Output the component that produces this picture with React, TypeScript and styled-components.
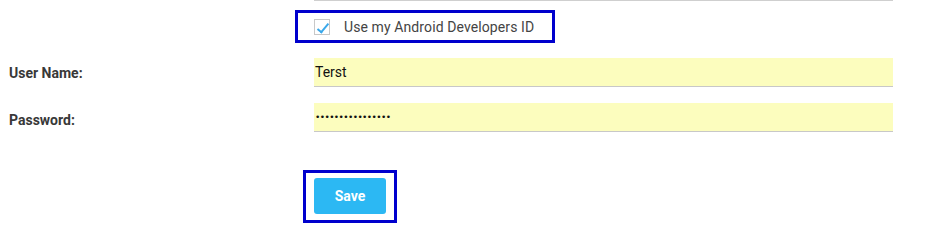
import { ReactElement, useState } from 'react'
import styled, { createGlobalStyle } from 'styled-components'

const GlobalStyle = createGlobalStyle`
  body {
    margin: 0;
    background: #fff;
    font-family: Roboto, "Liberation Sans", Arial, sans-serif;
  }
`

function App(): ReactElement {
  const [useDevId, setUseDevId] = useState(true)

  return (
    <>
      <GlobalStyle />
      <Form>
        <Spacer />
        <Divider />

        <Spacer />
        <FieldCell>
          <HighlightBox $offset={19} $padding="0 18px 0 16px">
            <CheckRow>
              <Checkbox type="checkbox" checked={useDevId} onChange={() => setUseDevId(!useDevId)} />
              <CheckLabel>Use my Android Developers ID</CheckLabel>
            </CheckRow>
          </HighlightBox>
        </FieldCell>

        <Label $bottom={6}>User Name:</Label>
        <FieldCell $top={15}>
          <TextInput type="text" defaultValue="Terst" />
        </FieldCell>

        <Label $bottom={4}>Password:</Label>
        <FieldCell $top={16}>
          <TextInput type="password" defaultValue="••••••••••••••••" />
        </FieldCell>

        <Spacer />
        <FieldCell $top={38}>
          <HighlightBox $offset={11} $padding="5px 8px 6px 8px">
            <SaveButton type="button">Save</SaveButton>
          </HighlightBox>
        </FieldCell>
      </Form>
    </>
  )
}

export default App

const Form = styled.div`
  display: grid;
  grid-template-columns: 314px 579px;
  align-items: end;
`

const Spacer = styled.div``

const Divider = styled.div`
  height: 1px;
  background: #cfcfcf;
`

const FieldCell = styled.div<{ $top?: number }>`
  display: flex;
  padding-top: ${(p) => p.$top ?? 9}px;
`

const HighlightBox = styled.div<{ $offset: number; $padding: string }>`
  display: flex;
  align-items: center;
  margin-left: -${(p) => p.$offset}px;
  padding: ${(p) => p.$padding};
  border: 3px solid #0000cd;
`

const CheckRow = styled.label`
  display: flex;
  align-items: center;
  height: 27px;
  gap: 14px;
  cursor: pointer;
`

const Checkbox = styled.input`
  appearance: none;
  margin: 0;
  width: 16px;
  height: 16px;
  border: 1px solid #c8c8c8;
  background: #fff;
  position: relative;
  cursor: pointer;

  &:checked::after {
    content: '';
    position: absolute;
    left: 5px;
    top: 1px;
    width: 4px;
    height: 10px;
    border: solid #3aa8ea;
    border-width: 0 2.5px 2.5px 0;
    transform: rotate(40deg);
  }
`

const CheckLabel = styled.span`
  font-size: 14px;
  color: #444;
  letter-spacing: 0.1px;
`

const Label = styled.div<{ $bottom: number }>`
  padding-left: 9px;
  padding-bottom: ${(p) => p.$bottom}px;
  font-size: 14px;
  font-weight: 700;
  color: #383838;
`

const TextInput = styled.input`
  width: 100%;
  height: 29px;
  box-sizing: border-box;
  margin: 0;
  padding: 0 1px;
  border: none;
  border-bottom: 1px solid #c8c8c8;
  background: #fcfdbe;
  font-family: Roboto, "Liberation Sans", Arial, sans-serif;
  font-size: 14px;
  color: #111;
  outline: none;

  &[type='password'] {
    font-family: Verdana, "DejaVu Sans", sans-serif;
    font-size: 9px;
    letter-spacing: -0.6px;
  }
`

const SaveButton = styled.button`
  width: 72px;
  height: 36px;
  border: none;
  border-radius: 3px;
  background: #2cb8f3;
  color: #fff;
  font-family: Roboto, "Liberation Sans", Arial, sans-serif;
  font-size: 14px;
  font-weight: 700;
  cursor: pointer;
`
